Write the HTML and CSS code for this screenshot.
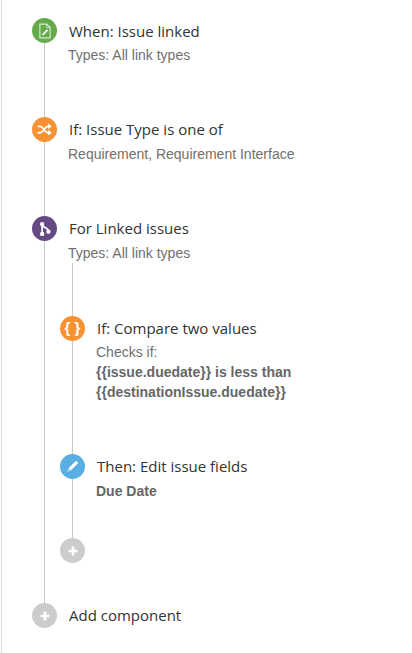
FILE: index.html
```html
<!DOCTYPE html>
<html lang="en">
<head>
    <meta charset="UTF-8">
    <meta name="viewport" content="width=device-width, initial-scale=1.0">
    <title>Automation rule</title>
    <link rel="stylesheet" href="styles.css">
</head>
<body>
    <div class="rule">
        <div class="step step-first">
            <div class="rail">
                <div class="dot green">
                    <svg viewBox="0 0 14 14" width="16" height="16"><path d="M2.500 1h6L11.500 4v9h-9z" fill="none" stroke="#d8ecd0" stroke-width="1"/><path d="M8.500 1v3h3" fill="none" stroke="#d8ecd0" stroke-width=".8"/><path d="M4.800 10.500l4.400-4.400" stroke="#fff" stroke-width="1.500" fill="none"/></svg>
                </div>
                <div class="line"></div>
            </div>
            <div class="body">
                <div class="title">When: Issue linked</div>
                <div class="sub">Types: All link types</div>
            </div>
        </div>

        <div class="step step-second">
            <div class="rail">
                <div class="dot orange">
                    <svg viewBox="0 0 14 14" width="15" height="15"><path d="M.5 4h2.500c2.500 0 4.500 6 7 6h1.500M.5 10h2.500c2.500 0 4.500-6 7-6h1.500" fill="none" stroke="#fff" stroke-width="1.700"/><path d="M10.500 1.300L13.700 4l-3.200 2.700zM10.500 7.300l3.200 2.700-3.200 2.700z" fill="#fff"/></svg>
                </div>
                <div class="line"></div>
            </div>
            <div class="body">
                <div class="title">If: Issue Type is one of</div>
                <div class="sub">Requirement, Requirement Interface</div>
            </div>
        </div>

        <div class="step step-third">
            <div class="rail">
                <div class="dot purple">
                    <svg viewBox="0 0 14 14" width="16" height="16"><path d="M4.500 2.500v9M4.500 3c0 3 5.500 2.500 5.500 6" fill="none" stroke="#fff" stroke-width="1.500"/><circle cx="4.500" cy="2.700" r="1.900" fill="#fff"/><circle cx="4.500" cy="11.300" r="1.900" fill="#fff"/><circle cx="10" cy="9.300" r="1.900" fill="#fff"/></svg>
                </div>
                <div class="line"></div>
            </div>
            <div class="body">
                <div class="title">For Linked issues</div>
                <div class="sub">Types: All link types</div>

                <div class="nested">
                    <div class="line lead"></div>

                    <div class="step step-compare">
                        <div class="rail">
                            <div class="dot orange braces">{ }</div>
                            <div class="line"></div>
                        </div>
                        <div class="body">
                            <div class="title">If: Compare two values</div>
                            <div class="sub">Checks if:</div>
                            <div class="sub strong">{{issue.duedate}} is less than</div>
                            <div class="sub strong">{{destinationIssue.duedate}}</div>
                        </div>
                    </div>

                    <div class="step step-edit">
                        <div class="rail">
                            <div class="dot blue">
                                <svg viewBox="0 0 14 14" width="15" height="15"><path d="M3.200 8.600l6.300-6.300a1.300 1.300 0 0 1 1.800 0l.4.400a1.300 1.300 0 0 1 0 1.800l-6.300 6.300z" fill="#fff"/><path d="M2.700 9.300l2 2-2.700.7z" fill="#cfe6f6"/></svg>
                            </div>
                            <div class="line"></div>
                        </div>
                        <div class="body">
                            <div class="title">Then: Edit issue fields</div>
                            <div class="sub strong">Due Date</div>
                        </div>
                    </div>

                    <div class="step">
                        <div class="rail">
                            <div class="dot grey">
                                <svg viewBox="0 0 10 10" width="10" height="10"><path d="M5 .5v9M.5 5h9" stroke="#fff" stroke-width="2.600"/></svg>
                            </div>
                        </div>
                    </div>
                </div>
            </div>
        </div>

        <div class="step">
            <div class="rail">
                <div class="dot grey">
                    <svg viewBox="0 0 10 10" width="10" height="10"><path d="M5 .5v9M.5 5h9" stroke="#fff" stroke-width="2.600"/></svg>
                </div>
            </div>
            <div class="body">
                <div class="title">Add component</div>
            </div>
        </div>
    </div>
</body>
</html>
```

FILE: styles.css
```css
* {
    margin: 0;
    padding: 0;
    box-sizing: border-box;
}

body {
    background-color: #fff;
    overflow: hidden;
}

.rule {
    margin-left: 1px;
    border-left: 1px solid #ddd;
    height: 653px;
    padding: 18px 0 0 30px;
}

.step {
    display: flex;
    gap: 12px;
}

.step-first,
.step-second {
    height: 99px;
}

.step-third {
    height: 387px;
}

.step-compare {
    height: 138px;
}

.step-edit {
    height: 84px;
}

.rail {
    width: 25px;
    flex: none;
    display: flex;
    flex-direction: column;
    align-items: center;
}

.dot {
    width: 25px;
    height: 25px;
    flex: none;
    border-radius: 50%;
    display: flex;
    align-items: center;
    justify-content: center;
}

.green { background-color: #65ab4b; }
.orange { background-color: #f79232; }
.purple { background-color: #654982; }
.blue { background-color: #59afe1; }
.grey { background-color: #ccc; }

.braces {
    color: #fff;
    font-family: "Liberation Sans", Arial, sans-serif;
    font-size: 15px;
    font-weight: bold;
    padding-bottom: 2px;
}

.line {
    width: 1px;
    flex: 1;
    background-color: #c8c8c8;
}

.body {
    flex: 1;
    min-width: 0;
}

.title {
    font-family: "Open Sans", sans-serif;
    font-size: 15px;
    line-height: 20px;
    color: #333;
    padding-top: 2px;
}

.sub {
    font-family: "Liberation Sans", Arial, sans-serif;
    font-size: 14px;
    line-height: 20px;
    color: #707070;
    margin-left: -1px;
}

.title + .sub {
    margin-top: 5px;
}

.step-first .title {
    padding-top: 3px;
}

.step-first .title + .sub,
.step-compare .title + .sub {
    margin-top: 4px;
}

.strong {
    font-weight: bold;
    color: #666;
}

.nested {
    margin-left: -9px;
}

.lead {
    height: 53px;
    margin-left: 12px;
}
```
